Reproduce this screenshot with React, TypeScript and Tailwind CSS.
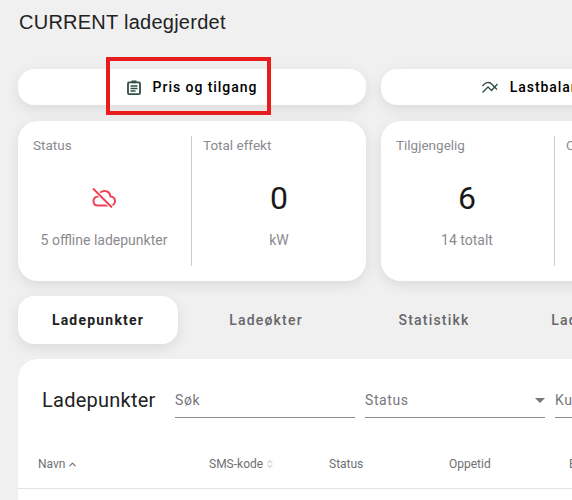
import { ChevronUp, ChevronsUpDown } from "lucide-react";

const BODY = "font-['Roboto',sans-serif]";

const ClipboardIcon = () => (
    <svg width="14" height="15" viewBox="0 0 14 15" fill="none" stroke="#2f4f46" strokeWidth="1.8">
        <rect x="1" y="2.4" width="12" height="11.7" rx="1" />
        <rect x="4.5" y="0.5" width="5" height="2.6" fill="#2f4f46" stroke="none" />
        <path d="M3.5 6h7M3.5 8.5h7M3.5 11h5" strokeWidth="1.3" />
    </svg>
);

const BalanceIcon = () => (
    <svg width="16" height="13" viewBox="0 0 16 13" fill="none" stroke="#2f4f46" strokeWidth="1.4">
        <path d="M0.5 5C3 1.5 7 0.5 9 2.5l6 6" />
        <path d="M0.5 11.5L6 6l3.5 3.5L15.500 3" />
    </svg>
);

const OfflineIcon = () => (
    <svg width="24" height="20" viewBox="0 0 24 20" fill="none">
        <path
            d="M6 17.500C3 17.500 1.500 15.500 1.500 13C1.500 10.500 3.500 8.500 6 8.500C6.500 5 9.500 3 12.500 3C16 3 18 5.500 18.500 8.500C21 8.500 23 10.500 23 13C23 15.500 21 17.500 18.500 17.500Z"
            stroke="#ef4056"
            strokeWidth="2"
        />
        <path d="M1 0.500L20 19.500" stroke="white" strokeWidth="4" />
        <path d="M1 0.500L20 19.500" stroke="#ef4056" strokeWidth="2" />
    </svg>
);

const ActionButton = ({ icon, label, className }: { icon: React.ReactNode; label: string; className?: string }) => (
    <div className={`w-[348px] h-9 shrink-0 bg-white rounded-2xl shadow-[0_4px_14px_rgba(0,0,0,0.09)] flex items-center justify-center gap-3 ${className ?? ""}`}>
        {icon}
        <span className="font-['Roboto',sans-serif] text-sm font-medium tracking-[0.95px] text-black">{label}</span>
    </div>
);

const StatColumn = ({ title, value, sub, divider }: { title: string; value: React.ReactNode; sub: string; divider?: boolean }) => (
    <div className={`flex flex-col h-[130px] ${divider ? "w-[164px] pl-[11px] border-l border-[#cccccc]" : "w-[158px] pr-4"}`}>
        <span className="text-[13.500px] leading-[18px] text-[#8a8a8f]">{title}</span>
        <div className="h-[70px] mt-[9px] flex items-center justify-center text-[32px] text-[#1a1a1a]">{value}</div>
        <span className="-mt-0.5 text-sm leading-[18px] text-center text-[#8a8a8f]">{sub}</span>
    </div>
);

const StatCard = ({ children }: { children: React.ReactNode }) => (
    <div className="w-[348px] h-40 shrink-0 bg-white rounded-[20px] shadow-[0_4px_14px_rgba(0,0,0,0.09)] pt-[15px] pl-[15px] flex">
        {children}
    </div>
);

const Field = ({ label, width, select, className }: { label: string; width: string; select?: boolean; className?: string }) => (
    <div className={`${width} h-[37px] shrink-0 border-b border-[#8c8c8c] flex items-center justify-between pt-0.5 ${className ?? ""}`}>
        <span className="text-sm tracking-[0.6px] text-[#77777c]">{label}</span>
        {select && <div className="w-0 h-0 border-x-[5px] border-x-transparent border-t-[5px] border-t-[#777777]" />}
    </div>
);

export default function App() {
    return (
        <div className={`relative w-[572px] h-[500px] overflow-hidden bg-[#f0f0f0] ${BODY}`}>
            <h1 className="pl-[19px] pt-[10px] font-['Liberation_Sans',sans-serif] text-xl tracking-[0.25px] leading-[24px] text-[#222222]">CURRENT ladegjerdet</h1>

            <div className="flex gap-[15px] pl-[18px] mt-[35px]">
                <ActionButton icon={<ClipboardIcon />} label="Pris og tilgang" />
                <ActionButton icon={<BalanceIcon />} label="Lastbalansering" className="pr-1" />
            </div>

            <div className="flex gap-[15px] pl-[18px] mt-4">
                <StatCard>
                    <StatColumn title="Status" value={<OfflineIcon />} sub="5 offline ladepunkter" />
                    <StatColumn title="Total effekt" value="0" sub="kW" divider />
                </StatCard>
                <StatCard>
                    <StatColumn title="Tilgjengelig" value="6" sub="14 totalt" />
                    <StatColumn title="Opptatt" value="0" sub="14 totalt" divider />
                </StatCard>
            </div>

            <div className="flex gap-2 pl-[18px] mt-[15px]">
                {["Ladepunkter", "Ladeøkter", "Statistikk", "Ladetilganger"].map((tab, i) => (
                    <div
                        key={tab}
                        className={`w-40 h-12 shrink-0 rounded-2xl flex items-center justify-center text-sm tracking-[1.2px] ${i === 0 ? "bg-white font-bold text-[#222222] shadow-[0_4px_14px_rgba(0,0,0,0.09)]" : "font-medium text-[#66666b]"}`}
                    >
                        {tab}
                    </div>
                ))}
            </div>

            <div className="ml-[18px] mt-[15px] w-[800px] h-[200px] bg-white rounded-t-[20px]">
                <div className="flex items-start pt-[22px] pl-6">
                    <span className="w-[133px] h-9 flex items-center pt-0.5 text-xl tracking-[0.25px] text-[#222222]">Ladepunkter</span>
                    <Field label="Søk" width="w-[180px]" />
                    <Field label="Status" width="w-[180px] ml-[10px]" select className="h-9" />
                    <Field label="Kunde" width="w-[180px] ml-[10px]" className="h-9" />
                </div>
                <div className="flex items-end h-[71px] pb-4 pl-5 text-xs text-[#6f6f72] border-b border-[#e2e2e2]">
                    <span className="w-[171px] flex items-center gap-0.5">Navn <ChevronUp size={11} strokeWidth={2.5} /></span>
                    <span className="w-[120px] flex items-center gap-0.5">SMS-kode <ChevronsUpDown size={10} color="#aaaaaa" /></span>
                    <span className="w-[120px]">Status</span>
                    <span className="w-[120px]">Oppetid</span>
                    <span className="w-[120px]">Eier</span>
                </div>
            </div>

            <div className="absolute left-[106px] top-[57px] w-[165px] h-[58px] border-4 border-[#e81c1c]" />
        </div>
    );
}
